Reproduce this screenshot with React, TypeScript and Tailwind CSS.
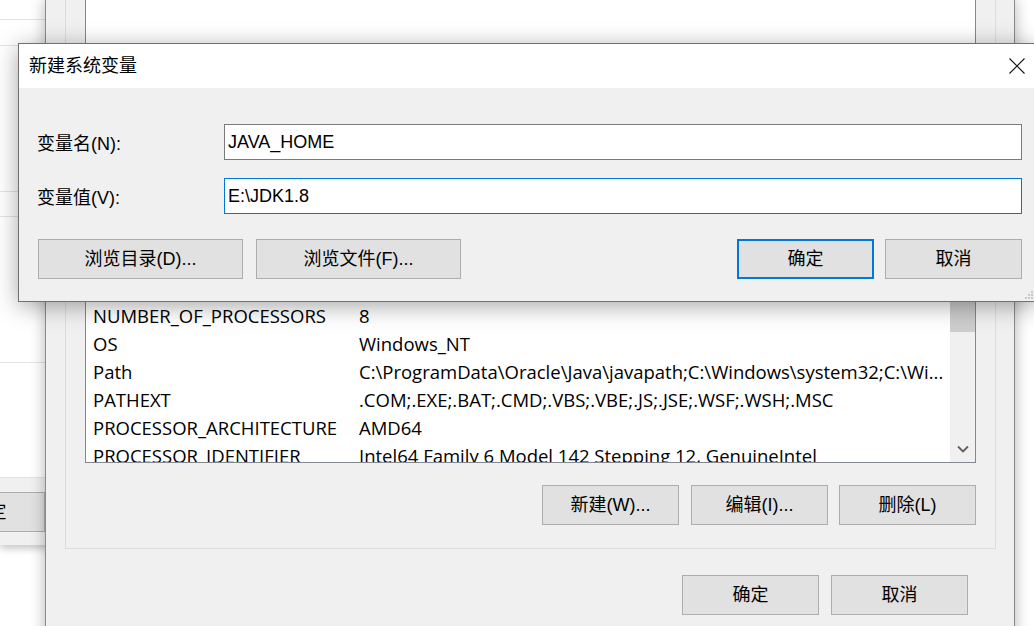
import React from "react";

const rows: [string, string][] = [
  ["NUMBER_OF_PROCESSORS", "8"],
  ["OS", "Windows_NT"],
  ["Path", "C:\\ProgramData\\Oracle\\Java\\javapath;C:\\Windows\\system32;C:\\Wi..."],
  ["PATHEXT", ".COM;.EXE;.BAT;.CMD;.VBS;.VBE;.JS;.JSE;.WSF;.WSH;.MSC"],
  ["PROCESSOR_ARCHITECTURE", "AMD64"],
  ["PROCESSOR_IDENTIFIER", "Intel64 Family 6 Model 142 Stepping 12, GenuineIntel"],
];

function Btn({ label, w, primary }: { label: string; w: string; primary?: boolean }) {
  return (
    <div
      className={`${w} h-[40px] shrink-0 flex items-center justify-center bg-[#e1e1e1] ${
        primary ? "border-2 border-[#0078d7]" : "border border-[#adadad]"
      }`}
    >
      {label}
    </div>
  );
}

export default function App() {
  return (
    <div className="relative w-[1034px] h-[626px] overflow-hidden bg-white text-black text-[18px] leading-none font-['Liberation_Sans','Noto_Sans_CJK_SC',sans-serif]">
      {/* window far behind, left */}
      <div className="absolute left-0 top-0 w-[60px] h-[545px] bg-white flex flex-col shadow-[0_3px_8px_rgba(0,0,0,0.25)]">
        <div className="h-[20px] border-b border-[#e3e3e3]" />
        <div className="h-[26px] border-b border-[#e3e3e3]" />
        <div className="h-[146px] border-b border-[#e3e3e3]" />
        <div className="h-[25px] border-b border-[#e3e3e3]" />
        <div className="h-[146px] border-b border-[#e3e3e3]" />
        <div className="flex-1" />
        <div className="h-[68px] bg-[#f0f0f0] border-t border-[#e3e3e3] pt-[14px]">
          <div className="ml-[-68px] w-[113px] h-[40px] bg-[#e1e1e1] border border-[#adadad] flex items-center justify-center">
            确定
          </div>
        </div>
      </div>

      {/* environment variables dialog */}
      <div className="absolute left-[45px] top-0 w-[970px] h-[660px] bg-[#f0f0f0] border-x border-[#8a8a8a] shadow-[0_0_14px_rgba(0,0,0,0.3)] flex flex-col">
        <div className="ml-[19px] w-[931px] border-x border-b border-[#dcdcdc] px-[19px] pb-[23px] flex flex-col">
          <div className="h-[200px] bg-white border-x border-b border-[#828790]" />
          <div className="h-[101px]" />
          <div className="h-[162px] bg-white border border-[#828790] flex overflow-hidden text-[18.5px] font-['Open_Sans','Noto_Sans_CJK_SC',sans-serif]">
            <div className="flex-1 flex flex-col overflow-hidden">
              {rows.map(([k, v]) => (
                <div key={k} className="h-[28px] shrink-0 flex items-center pl-[7px] whitespace-nowrap leading-[26px]">
                  <div className="w-[266px] shrink-0">{k}</div>
                  <div className="overflow-hidden">{v}</div>
                </div>
              ))}
            </div>
            <div className="w-[25px] shrink-0 bg-[#f0f0f0] flex flex-col">
              <div className="h-[30px] bg-[#cdcdcd]" />
              <div className="flex-1" />
              <div className="h-[26px] flex items-center justify-center">
                <svg width="12" height="8" viewBox="0 0 12 8">
                  <path d="M1 1.5 L6 6.5 L11 1.5" fill="none" stroke="#606060" strokeWidth="1.8" />
                </svg>
              </div>
            </div>
          </div>
          <div className="mt-[22px] flex justify-end gap-[12px]">
            <Btn label="新建(W)..." w="w-[137px]" />
            <Btn label="编辑(I)..." w="w-[137px]" />
            <Btn label="删除(L)" w="w-[137px] ml-[-1px]" />
          </div>
        </div>
        <div className="mt-[26px] pr-[46px] flex justify-end gap-[12px]">
          <Btn label="确定" w="w-[137px]" />
          <Btn label="取消" w="w-[137px]" />
        </div>
      </div>

      {/* new system variable dialog */}
      <div className="absolute left-[18px] top-[43px] w-[1020px] bg-[#f0f0f0] border border-[#707070] shadow-[0_4px_22px_rgba(0,0,0,0.35)] flex flex-col">
        <div className="h-[44px] bg-white flex items-center pl-[10px]">
          <span>新建系统变量</span>
          <svg className="ml-auto mr-[12px]" width="16" height="16" viewBox="0 0 16 16">
            <path d="M0.5 0.5 L15.5 15.5 M15.5 0.5 L0.5 15.5" stroke="#111" strokeWidth="1.1" />
          </svg>
        </div>
        <div className="pl-[18px] pr-[15px] pt-[36px] pb-[22px] flex flex-col">
          <div className="flex items-center h-[36px]">
            <div className="w-[187px] shrink-0 pt-[3px]">变量名(N):</div>
            <div className="flex-1 h-[36px] bg-white border border-[#7a7a7a] pl-[3px] flex items-center leading-[24px]">JAVA_HOME</div>
          </div>
          <div className="mt-[18px] flex items-center h-[36px]">
            <div className="w-[187px] shrink-0 pt-[3px]">变量值(V):</div>
            <div className="flex-1 h-[36px] bg-white border border-[#0078d7] pl-[3px] flex items-center leading-[24px]">E:\JDK1.8</div>
          </div>
          <div className="mt-[25px] flex">
            <div className="ml-[1px] flex gap-[13px]">
              <Btn label="浏览目录(D)..." w="w-[205px]" />
              <Btn label="浏览文件(F)..." w="w-[205px]" />
            </div>
            <div className="ml-auto flex gap-[11px]">
              <Btn label="确定" w="w-[137px]" primary />
              <Btn label="取消" w="w-[137px]" />
            </div>
          </div>
        </div>
        <svg className="absolute right-[4px] bottom-[2px]" width="8" height="8" viewBox="0 0 8 8">
          <rect x="6" y="0" width="2" height="2" fill="#c8c8c8" />
          <rect x="3" y="3" width="2" height="2" fill="#c8c8c8" />
          <rect x="6" y="3" width="2" height="2" fill="#c8c8c8" />
          <rect x="0" y="6" width="2" height="2" fill="#c8c8c8" />
          <rect x="3" y="6" width="2" height="2" fill="#c8c8c8" />
          <rect x="6" y="6" width="2" height="2" fill="#c8c8c8" />
        </svg>
      </div>
    </div>
  );
}
